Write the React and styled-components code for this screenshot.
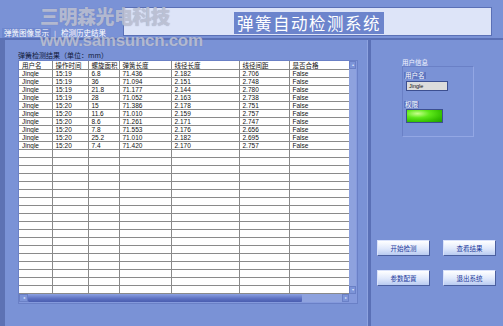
import React from "react";
import styled, { createGlobalStyle } from "styled-components";

const GlobalStyle = createGlobalStyle`
  html, body {
    margin: 0;
    padding: 0;
    background: #7a92d6;
  }
  body {
    font-family: "Liberation Sans", "Noto Sans CJK SC", sans-serif;
  }
`;

const Window = styled.div`
  position: relative;
  width: 503px;
  height: 326px;
  overflow: hidden;
  background: #7a92d6;
  display: flex;
  flex-direction: column;
`;

const Header = styled.div`
  height: 38px;
  display: flex;
  padding-left: 2px;
  border-bottom: 2px solid #5a70b6;
`;

const Tabs = styled.div`
  width: 121px;
  align-self: flex-end;
  display: flex;
  align-items: center;
  gap: 3px;
  height: 10px;
  margin-bottom: 0px;
  font-family: "Noto Sans CJK SC", sans-serif;
  font-size: 7.5px;
  color: #ffffff;
`;

const Tab = styled.span`
  padding: 0 2px;
  background: ${({ active }) => (active ? "#6f88cf" : "transparent")};
  line-height: 10px;
`;

const TitleBox = styled.div`
  margin-top: 7px;
  width: 364px;
  height: 26px;
  background: #dde4f8;
  border: 1px solid #5a70b6;
  display: flex;
  justify-content: center;
  align-items: flex-end;
  padding-bottom: 1px;
  box-sizing: content-box;
  padding-left: 3px;
`;

const Title = styled.div`
  height: 22px;
  line-height: 22px;
  padding: 0 3px;
  background: #6c84cc;
  color: #ffffff;
  font-family: "Noto Sans CJK SC", sans-serif;
  font-size: 16.5px;
  letter-spacing: 1.5px;
`;

const Body = styled.div`
  flex: 1;
  display: flex;
  border-left: 5px solid #5d72b4;
`;

const LeftPanel = styled.div`
  width: 363px;
  padding: 11px 0 0 13px;
  box-sizing: border-box;
  border-right: 1px solid #8ea3e0;
`;

const Divider = styled.div`
  width: 3px;
  background: #5a70b6;
`;

const GroupLabel = styled.div`
  font-family: "Noto Sans CJK SC", sans-serif;
  font-size: 7px;
  line-height: 9px;
  color: #111a3a;
  height: 9px;
`;

const TableFrame = styled.div`
  width: 340px;
  display: flex;
  flex-direction: column;
  background: #8499dc;
  border: 1px solid #6a80c6;
  box-sizing: border-box;
  padding: 0 1px 1px 0;
`;

const TableRow = styled.div`
  display: flex;
`;

const GridArea = styled.div`
  width: 330px;
  height: 233px;
  overflow: hidden;
  background: #ffffff;
`;

const Grid = styled.table`
  border-collapse: collapse;
  table-layout: fixed;
  width: 330px;
  font-size: 6.5px;
  color: #111;
`;

const Th = styled.th`
  height: 8px;
  padding: 0 0 0 3px;
  font-weight: normal;
  text-align: left;
  font-family: "Noto Sans CJK SC", sans-serif;
  font-size: 6.5px;
  line-height: 7px;
  border: 1px solid #8a8a8a;
  border-top: none;
  border-left: ${({ first }) => (first ? "none" : "1px solid #8a8a8a")};
  white-space: nowrap;
  overflow: hidden;
`;

const Td = styled.td`
  height: 7px;
  padding: 0 0 0 3px;
  line-height: 7px;
  font-family: "Liberation Sans", sans-serif;
  border: 1px solid #8a8a8a;
  border-left: ${({ first }) => (first ? "none" : "1px solid #8a8a8a")};
  white-space: nowrap;
  overflow: hidden;
`;

const VScroll = styled.div`
  width: 7px;
  display: flex;
  flex-direction: column;
  justify-content: space-between;
  background: #8ea2de;
`;

const ArrowBox = styled.div`
  width: 7px;
  height: 8px;
  background: #7d94d8;
  border: 1px solid #6a80c6;
  box-sizing: border-box;
  color: #dfe6fb;
  font-size: 4px;
  line-height: 6px;
  text-align: center;
`;

const HScroll = styled.div`
  width: 330px;
  height: 8px;
  display: flex;
  background: #8ea2de;
`;

const Thumb = styled.div`
  width: 274px;
  height: 8px;
  background: linear-gradient(#8ba0e2, #5b6fc0 60%, #4a5eb0);
  border-radius: 1px;
`;

const Track = styled.div`
  flex: 1;
`;

const HArrow = styled(ArrowBox)`
  width: ${({ w }) => w}px;
`;

const Corner = styled.div`
  width: 7px;
  height: 8px;
  background: #8499dc;
`;

const RightPanel = styled.div`
  flex: 1;
  padding: 18px 0 0 31px;
  box-sizing: border-box;
  display: flex;
  flex-direction: column;
`;

const SmallLabel = styled.div`
  font-family: "Noto Sans CJK SC", sans-serif;
  font-size: 6.5px;
  line-height: 8px;
  color: #f2f4ff;
`;

const InfoBox = styled.div`
  width: 72px;
  height: 71px;
  border: 1px solid #6a80c6;
  border-right-color: #93a7e4;
  border-bottom-color: #93a7e4;
  box-sizing: border-box;
  padding: 5px 0 0 1px;
  display: flex;
  flex-direction: column;
  align-items: flex-start;
`;

const FieldLabel = styled.div`
  font-family: "Noto Sans CJK SC", sans-serif;
  font-size: 6.5px;
  line-height: 7px;
  padding: 0 1px;
  margin-top: ${({ gap }) => gap || 0}px;
  color: #ffffff;
  background: #5f77c2;
`;

const NameInput = styled.div`
  margin: 2px 0 0 2px;
  width: 42px;
  height: 10px;
  background: #dcdcdc;
  border: 1px solid #3c4f90;
  box-sizing: border-box;
  font-size: 5.5px;
  line-height: 8px;
  padding-left: 2px;
  color: #111;
`;

const Lamp = styled.div`
  margin: 1px 0 0 2px;
  width: 37px;
  height: 14px;
  border: 1px solid #3c4f90;
  box-sizing: border-box;
  background: radial-gradient(ellipse at 30% 30%, #c8ff8c 0%, #5ee81a 35%, #35c200 70%, #229a00 100%);
`;

const Buttons = styled.div`
  margin: 103px 0 0 -25px;
  display: grid;
  grid-template-columns: 53px 53px;
  column-gap: 13px;
  row-gap: 14px;
`;

const Button = styled.div`
  height: 16px;
  background: linear-gradient(#ffffff, #dfe8fb 55%, #b9cbf1);
  border: 1px solid #4b5f9f;
  border-top-color: #d9e2fb;
  border-left-color: #d9e2fb;
  box-sizing: border-box;
  display: flex;
  align-items: center;
  justify-content: center;
  font-family: "Noto Sans CJK SC", sans-serif;
  font-size: 6.5px;
  color: #1e3a9c;
`;

const Watermark = styled.div`
  position: absolute;
  left: 40px;
  top: ${({ top }) => top}px;
  font-family: ${({ cjk }) => (cjk ? '"Noto Sans CJK SC", sans-serif' : '"Liberation Sans", sans-serif')};
  font-weight: 900;
  font-size: ${({ size }) => size}px;
  letter-spacing: ${({ spacing }) => spacing}px;
  line-height: 1;
  color: rgba(198, 202, 218, 0.8);
  text-shadow: 0 0 1px rgba(100, 110, 150, 0.6);
  pointer-events: none;
  white-space: nowrap;
`;

const headers = ["用户名", "操作时间", "螺旋面积", "弹簧长度", "线径长度", "线径间距", "是否合格"];
const widths = [33, 36, 31, 52, 68, 50, 60];

const rows = [
  ["Jingle", "15:19", "6.8", "71.436", "2.182", "2.706", "False"],
  ["Jingle", "15:19", "36", "71.094", "2.151", "2.748", "False"],
  ["Jingle", "15:19", "21.8", "71.177", "2.144", "2.780", "False"],
  ["Jingle", "15:19", "28", "71.052", "2.163", "2.738", "False"],
  ["Jingle", "15:20", "15", "71.386", "2.178", "2.751", "False"],
  ["Jingle", "15:20", "11.6", "71.010", "2.159", "2.757", "False"],
  ["Jingle", "15:20", "8.6", "71.261", "2.171", "2.747", "False"],
  ["Jingle", "15:20", "7.8", "71.553", "2.176", "2.656", "False"],
  ["Jingle", "15:20", "25.2", "71.010", "2.182", "2.695", "False"],
  ["Jingle", "15:20", "7.4", "71.420", "2.170", "2.757", "False"],
];

const allRows = [...rows, ...Array.from({ length: 18 }, () => Array(7).fill(""))];

export default function App() {
  return (
    <>
      <GlobalStyle />
      <Window>
        <Header>
          <Tabs>
            <Tab active>弹簧图像显示</Tab>
            <span>|</span>
            <Tab>检测历史结果</Tab>
          </Tabs>
          <TitleBox>
            <Title>弹簧自动检测系统</Title>
          </TitleBox>
        </Header>
        <Body>
          <LeftPanel>
            <GroupLabel>弹簧检测结果（单位：mm）</GroupLabel>
            <TableFrame>
              <TableRow>
                <GridArea>
                  <Grid>
                    <colgroup>
                      {widths.map((w, i) => (
                        <col key={i} style={{ width: w }} />
                      ))}
                    </colgroup>
                    <thead>
                      <tr>
                        {headers.map((h, i) => (
                          <Th key={h} first={i === 0}>{h}</Th>
                        ))}
                      </tr>
                    </thead>
                    <tbody>
                      {allRows.map((r, ri) => (
                        <tr key={ri}>
                          {r.map((c, ci) => (
                            <Td key={ci} first={ci === 0}>{c}</Td>
                          ))}
                        </tr>
                      ))}
                    </tbody>
                  </Grid>
                </GridArea>
                <VScroll>
                  <ArrowBox>▴</ArrowBox>
                  <ArrowBox>▾</ArrowBox>
                </VScroll>
              </TableRow>
              <TableRow>
                <HScroll>
                  <HArrow w={9}>◂</HArrow>
                  <Thumb />
                  <Track />
                  <HArrow w={7}>▸</HArrow>
                </HScroll>
                <Corner />
              </TableRow>
            </TableFrame>
          </LeftPanel>
          <Divider />
          <RightPanel>
            <SmallLabel>用户信息</SmallLabel>
            <InfoBox>
              <FieldLabel>用户名</FieldLabel>
              <NameInput>Jingle</NameInput>
              <FieldLabel gap={10}>权限</FieldLabel>
              <Lamp />
            </InfoBox>
            <Buttons>
              <Button>开始检测</Button>
              <Button>查看结果</Button>
              <Button>参数配置</Button>
              <Button>退出系统</Button>
            </Buttons>
          </RightPanel>
        </Body>
        <Watermark cjk top={6} size={19} spacing={-0.5}>三明森光电科技</Watermark>
        <Watermark top={32} size={17} spacing={-0.3}>www.samsuncn.com</Watermark>
      </Window>
    </>
  );
}
